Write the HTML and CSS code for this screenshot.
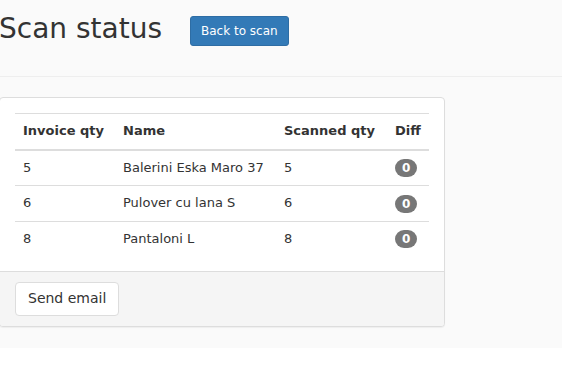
FILE: index.html
```html
<!DOCTYPE html>
<html lang="en">
<head>
    <meta charset="UTF-8">
    <meta name="viewport" content="width=device-width, initial-scale=1.0">
    <title>Scan status</title>
    <link rel="stylesheet" href="styles.css">
</head>
<body>
    <div class="page">
        <div class="page-header">
            <h1>Scan status</h1>
            <a class="btn btn-primary btn-sm" href="#">Back to scan</a>
        </div>

        <div class="panel">
            <div class="panel-body">
                <table class="table">
                    <thead>
                        <tr>
                            <th class="col-invoice">Invoice qty</th>
                            <th class="col-name">Name</th>
                            <th class="col-scanned">Scanned qty</th>
                            <th class="col-diff">Diff</th>
                        </tr>
                    </thead>
                    <tbody>
                        <tr>
                            <td>5</td>
                            <td>Balerini Eska Maro 37</td>
                            <td>5</td>
                            <td><span class="badge">0</span></td>
                        </tr>
                        <tr>
                            <td>6</td>
                            <td>Pulover cu lana S</td>
                            <td>6</td>
                            <td><span class="badge">0</span></td>
                        </tr>
                        <tr>
                            <td>8</td>
                            <td>Pantaloni L</td>
                            <td>8</td>
                            <td><span class="badge">0</span></td>
                        </tr>
                    </tbody>
                </table>
            </div>
            <div class="panel-footer">
                <button class="btn btn-default">Send email</button>
            </div>
        </div>
    </div>
</body>
</html>
```

FILE: styles.css
```css
body {
    margin: 0;
    padding: 0;
    font-family: "DejaVu Sans", sans-serif;
    font-size: 13px;
    line-height: 1.42857;
    color: #333;
    background: #fff;
}

.page {
    background: #fafafa;
    margin-left: -1px;
    padding-bottom: 1px;
}

/* Header */
.page-header {
    display: flex;
    align-items: flex-start;
    padding: 14px 0 30px;
    border-bottom: 1px solid #eee;
    margin-bottom: 20px;
}

.page-header h1 {
    margin: 0 28px 0 0;
    font-size: 28px;
    font-weight: normal;
    line-height: 1.1;
}

/* Buttons */
.btn {
    display: inline-block;
    font-family: inherit;
    border: 1px solid transparent;
    border-radius: 4px;
    cursor: pointer;
    text-decoration: none;
    white-space: nowrap;
}

.btn-primary {
    background: #337ab7;
    border-color: #2e6da4;
    color: #fff;
}

.btn-sm {
    margin-top: 2px;
    padding: 5px 10px;
    font-size: 12px;
    line-height: 1.5;
    border-radius: 3px;
}

.btn-default {
    padding: 6px 12px;
    font-size: 14px;
    line-height: 1.42857;
    background: #fff;
    border-color: #ddd;
    color: #333;
}

/* Panel */
.panel {
    width: 446px;
    box-sizing: border-box;
    background: #fff;
    border: 1px solid #ddd;
    border-radius: 4px;
    box-shadow: 0 1px 1px rgba(0, 0, 0, 0.05);
    margin-bottom: 20px;
}

.panel-body {
    padding: 15px;
}

.panel-footer {
    padding: 10px 15px;
    background: #f5f5f5;
    border-top: 1px solid #ddd;
    border-radius: 0 0 3px 3px;
}

/* Table */
.table {
    width: 100%;
    border-collapse: collapse;
    border-spacing: 0;
}

.table th,
.table td {
    padding: 8px;
    text-align: left;
    vertical-align: top;
    border-top: 1px solid #ddd;
}

.table thead th {
    font-weight: bold;
    vertical-align: bottom;
    border-bottom: 2px solid #ddd;
}

.table thead + tbody tr:first-child td {
    border-top: 0;
}

.col-invoice { width: 84px; }
.col-name { width: 145px; }
.col-scanned { width: 95px; }
.col-diff { width: 26px; }

.badge {
    display: inline-block;
    min-width: 8px;
    padding: 3px 7px;
    font-size: 12px;
    font-weight: bold;
    line-height: 1;
    color: #fff;
    text-align: center;
    background: #777;
    border-radius: 10px;
    vertical-align: middle;
}
```
